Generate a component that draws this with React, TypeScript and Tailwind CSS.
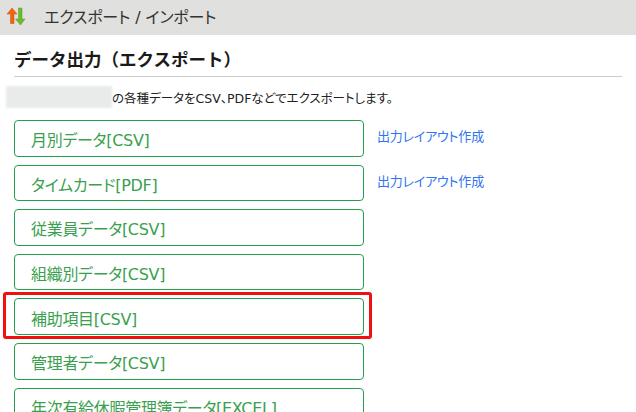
const rows = [
  { label: '月別データ[CSV]', layout: true },
  { label: 'タイムカード[PDF]', layout: true },
  { label: '従業員データ[CSV]' },
  { label: '組織別データ[CSV]' },
  { label: '補助項目[CSV]', marked: true },
  { label: '管理者データ[CSV]' },
  { label: '年次有給休暇管理簿データ[EXCEL]' },
];

function ArrowsIcon() {
  return (
    <svg width="20" height="20" viewBox="0 0 20 20" className="mb-[3px]">
      <path d="M6 2 L11 8 H8 V17.5 H4.5 V8 H1 Z" fill="#f2650f" stroke="#c9500c" strokeWidth="0.5" />
      <path d="M14.5 19 L9.5 13 H12.5 V2 H16 V13 H19 Z" fill="#6cbb2e" stroke="#58a020" strokeWidth="0.5" />
    </svg>
  );
}

export default function App() {
  return (
    <div className="h-[412px] w-[636px] overflow-hidden bg-white font-['DejaVu_Sans','Noto_Sans_CJK_JP',sans-serif] text-[#222] [font-feature-settings:'palt']">
      {/* Header */}
      <div className="flex h-[35px] items-center bg-[#e0e0de] pl-[6px]">
        <ArrowsIcon />
        <span className="ml-[18px] text-[16px] tracking-[-0.15px] text-[#333]">エクスポート / インポート</span>
      </div>

      <div className="px-[14px]">
        <h1 className="border-b border-[#cccccc] pb-[3px] pt-[13px] text-[17.5px] leading-[25px] font-bold text-[#1a1a1a] [font-feature-settings:normal]">
          データ出力（エクスポート）
        </h1>

        <div className="mt-[9px] -ml-[8px] flex h-[22px] items-center">
          <div className="h-[22px] w-[106px] bg-[#e9ebeb] blur-[1px]" />
          <span className="pt-[4px] text-[12.5px] text-[#222]">の各種データをCSV、PDFなどでエクスポートします。</span>
        </div>

        <div className="mt-[12px] flex flex-col gap-[8px]">
          {rows.map((row) => (
            <div key={row.label} className="flex items-center">
              <div className="relative">
                <a className="flex h-[36.6px] w-[350px] items-center rounded-[4px] border border-[#22a04c] bg-white pl-[16px] pt-[6px] text-[16px] tracking-[-0.3px] text-[#3a9f4e]">
                  {row.label}
                </a>
                {row.marked && (
                  <div className="absolute -top-[6px] -left-[11px] h-[47px] w-[369px] rounded-[3px] border-[3px] border-[#f01010]" />
                )}
              </div>
              {row.layout && (
                <a className="ml-[13px] -mt-[3px] text-[13px] tracking-[-0.2px] text-[#2f74f0]">出力レイアウト作成</a>
              )}
            </div>
          ))}
        </div>
      </div>
    </div>
  );
}
